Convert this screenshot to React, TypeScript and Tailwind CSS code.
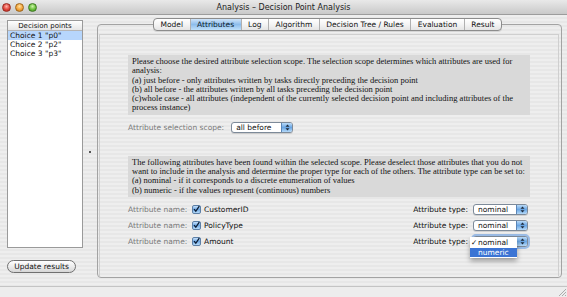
import React from "react";

const ui = "font-['DejaVu_Sans',sans-serif]";

function Stepper() {
  return (
    <span className="flex w-[11px] items-center justify-center rounded-r-[2px] border-l border-[#5a86b8] bg-gradient-to-b from-[#b9daf7] via-[#6aa6e4] to-[#b4d9f8]">
      <svg width="5" height="7" viewBox="0 0 5 7">
        <path d="M2.5 0.5 L4.5 2.8 L0.5 2.8 Z" fill="#1d2a3a" />
        <path d="M2.5 6.5 L4.5 4.2 L0.5 4.2 Z" fill="#1d2a3a" />
      </svg>
    </span>
  );
}

function Select({ value, width, focus }: { value: string; width: string; focus?: boolean }) {
  return (
    <div
      className={`flex h-[11px] ${width} items-stretch rounded-[3px] border border-[#7d8a99] bg-white ${
        focus ? "shadow-[0_0_0_2px_rgba(90,150,225,0.55)]" : "shadow-[0_1px_0_rgba(0,0,0,0.12)]"
      }`}
    >
      <span className="flex-1 pl-[4px] text-[7.5px] leading-[9px] text-[#111]">{value}</span>
      <Stepper />
    </div>
  );
}

function Check() {
  return (
    <span className="flex h-[9px] w-[9px] items-center justify-center rounded-[2px] border border-[#5c7fa6] bg-gradient-to-b from-[#c5e0fa] via-[#6fa8e4] to-[#b7dbf8]">
      <svg width="8" height="8" viewBox="0 0 8 8">
        <path d="M1.2 4.2 L3.2 6.6 L7.2 0.6" fill="none" stroke="#0c1d33" strokeWidth="1.5" />
      </svg>
    </span>
  );
}

const tabs = ["Model", "Attributes", "Log", "Algorithm", "Decision Tree / Rules", "Evaluation", "Result"];

const attrs = ["CustomerID", "PolicyType", "Amount"];

export default function App() {
  return (
    <div
      className={`flex h-[297px] w-[567px] flex-col overflow-hidden ${ui} bg-[repeating-linear-gradient(0deg,#eeeeee_0px,#eeeeee_2px,#e7e7e7_2px,#e7e7e7_4px)] text-[#111]`}
    >
      {/* title bar */}
      <div className="flex h-[15px] items-center border-b border-[#9c9c9c] bg-gradient-to-b from-[#e9e9e9] to-[#c9c9c9] px-[2px]">
        <div className="flex w-[60px] gap-[4px]">
          <span className="h-[9px] w-[9px] rounded-full border border-[#9a2b22] bg-[radial-gradient(circle_at_50%_35%,#ffb3a8,#e0443a_55%,#a8261c)]" />
          <span className="h-[9px] w-[9px] rounded-full border border-[#a0661a] bg-[radial-gradient(circle_at_50%_35%,#ffe2a0,#f3a33a_55%,#b8731a)]" />
          <span className="h-[9px] w-[9px] rounded-full border border-[#3f7a22] bg-[radial-gradient(circle_at_50%_35%,#cdf5a8,#69bf3c_55%,#3f8a1e)]" />
        </div>
        <div className="flex-1 text-center text-[8px] leading-[15px] text-[#222]">
          Analysis – Decision Point Analysis
        </div>
        <div className="w-[60px]" />
      </div>

      <div className="flex min-h-0 flex-1">
        {/* left column */}
        <div className="flex w-[83px] flex-col pl-[7px] pt-[5px]">
          <div className="h-[228px] w-[76px] border border-[#9a9a9a] bg-white">
            <div className="h-[10px] border-b border-[#b5b5b5] bg-gradient-to-b from-[#ffffff] to-[#e6e6e6] text-center text-[7px] leading-[10px] text-[#111]">
              Decision points
            </div>
            <div className="h-[9px] bg-[#b7d6fc] pl-[2px] text-[7.5px] leading-[9px]">Choice 1 "p0"</div>
            <div className="h-[9px] pl-[2px] text-[7.5px] leading-[9px]">Choice 2 "p2"</div>
            <div className="h-[9px] pl-[2px] text-[7.5px] leading-[9px]">Choice 3 "p3"</div>
          </div>
          <button className="mt-[12px] h-[13px] w-[69px] rounded-full border border-[#707070] bg-gradient-to-b from-[#ffffff] via-[#ececec] to-[#d6d6d6] text-[7.5px] leading-[11px] text-[#111]">
            Update results
          </button>
        </div>

        {/* split divider */}
        <div className="flex w-[14px] items-center justify-center pt-[2px]">
          <span className="h-[2px] w-[2px] bg-[#555]" />
        </div>

        {/* tabbed pane */}
        <div className="mr-[5px] flex min-w-0 flex-1 flex-col pt-[3px] pb-[8px]">
          <div className="relative z-10 flex h-[13px] justify-center pr-[4px]">
            <div className="flex rounded-[4px] border border-[#8c8c8c] bg-gradient-to-b from-[#ffffff] via-[#f4f4f4] to-[#e4e4e4] shadow-[0_1px_0_rgba(0,0,0,0.1)]">
              {tabs.map((t, i) => (
                <span
                  key={t}
                  className={`px-[6.5px] text-[7.5px] leading-[11px] ${
                    i > 0 ? "border-l border-[#b0b0b0]" : ""
                  } ${
                    t === "Attributes"
                      ? "bg-gradient-to-b from-[#cfe4f9] via-[#8dbdec] to-[#bfe0fa] text-[#0a1a2a]"
                      : ""
                  }`}
                >
                  {t}
                </span>
              ))}
            </div>
          </div>
          <div className="-mt-[7px] flex min-h-0 flex-1 flex-col rounded-[4px] border border-[#a3a3a3] pt-[9px] pb-[1px] pl-[1px] pr-[2px]">
            <div className="flex flex-1 flex-col border-l border-t border-r border-[#cfcfcf] pl-[28px] pr-[28px] pt-[20px]">
              <div className="bg-[#d9d9d9] px-[4px] py-[2px] font-['Liberation_Serif',serif] text-[8.5px] leading-[9.3px] text-[#111]">
                Please choose the desired attribute selection scope. The selection scope determines which attributes are used for
                analysis:
                <br />
                (a) just before - only attributes written by tasks directly preceding the decision point
                <br />
                (b) all before - the attributes written by all tasks preceding the decision point
                <br />
                (c)whole case - all attributes (independent of the currently selected decision point and including attributes of the
                process instance)
              </div>

              <div className="mt-[7px] flex h-[11px] items-center gap-[7px]">
                <span className="text-[7.5px] text-[#7a7a7a]">Attribute selection scope:</span>
                <Select value="all before" width="w-[62px]" />
              </div>

              <div className="mt-[23px] bg-[#d9d9d9] px-[4px] py-[2px] font-['Liberation_Serif',serif] text-[8.5px] leading-[9.3px] text-[#111]">
                The following attributes have been found within the selected scope. Please deselect those attributes that you do not
                want to include in the analysis and determine the proper type for each of the others. The attribute type can be set to:
                <br />
                (a) nominal - if it corresponds to a discrete enumeration of values
                <br />
                (b) numeric - if the values represent (continuous) numbers
              </div>

              <div className="mt-[7px] flex flex-col gap-[5px] pr-[2px]">
                {attrs.map((a, i) => (
                  <div key={a} className="flex h-[11px] items-center">
                    <span className="w-[64px] text-[7.5px] text-[#7a7a7a]">Attribute name:</span>
                    <Check />
                    <span className="ml-[3px] flex-1 text-[7.5px] text-[#111]">{a}</span>
                    <span className="mr-[5px] text-[7.5px] text-[#111]">Attribute type:</span>
                    <div className="relative">
                      <Select value="nominal" width="w-[55px]" focus={i === 2} />
                      {i === 2 && (
                        <div className="absolute left-[-3px] top-[1px] z-20 w-[47px] bg-white py-[1px] shadow-[0_3px_5px_rgba(0,0,0,0.35)]">
                          <div className="flex h-[10px] items-center text-[7.5px] text-[#111]">
                            <span className="w-[8px] pl-[1px]">✓</span>
                            <span>nominal</span>
                          </div>
                          <div className="flex h-[9px] items-center bg-[#3b74d4] pl-[8px] text-[7.5px] text-white">
                            numeric
                          </div>
                        </div>
                      )}
                    </div>
                  </div>
                ))}
              </div>
            </div>
          </div>
        </div>
      </div>

      {/* bottom strip */}
      <div className="flex h-[11px] justify-end border-t border-[#c4c4c4] bg-[#ededed]">
        <svg width="10" height="10" viewBox="0 0 10 10" className="self-end">
          <path d="M9 2 L2 9 M9 5 L5 9 M9 8 L8 9" stroke="#9a9a9a" strokeWidth="0.8" />
        </svg>
      </div>
    </div>
  );
}
